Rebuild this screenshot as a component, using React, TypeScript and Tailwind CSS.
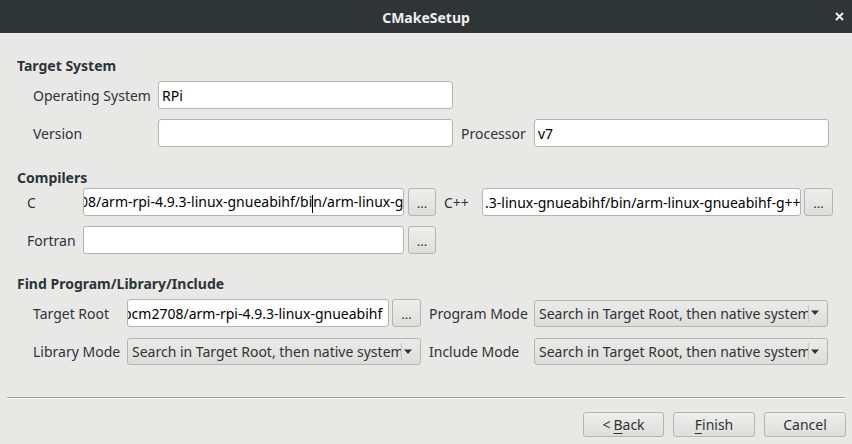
import React from "react";

const font = { fontFamily: '"Noto Sans", "DejaVu Sans", sans-serif' };

function Input({ w, children, className = "" }: { w: string; children?: React.ReactNode; className?: string }) {
  return (
    <div className={`${w} h-[28px] bg-white border border-[#b4b4b0] rounded-[3px] overflow-hidden flex items-center text-[14px] text-black whitespace-nowrap ${className}`}>
      {children}
    </div>
  );
}

function Dots({ w, className = "" }: { w: string; className?: string }) {
  return (
    <div className={`${w} h-[28px] rounded-[3px] border border-[#b4b4b0] bg-gradient-to-b from-[#eeeeec] to-[#dededb] flex items-center justify-center text-[13px] text-[#2e3436] pt-[4px] ${className}`}>
      ...
    </div>
  );
}

function Combo({ className = "" }: { className?: string }) {
  return (
    <div className={`w-[294px] h-[27px] rounded-[3px] border border-[#b4b4b0] bg-gradient-to-b from-[#ebebe9] to-[#dcdcd9] flex items-center text-[14px] text-[#2e3436] ${className}`}>
      <div className="w-[273px] overflow-hidden whitespace-nowrap pl-[4px]">Search in Target Root, then native system</div>
      <div className="w-px h-[17px] bg-[#c4c4c0]" />
      <svg width="11" height="6" viewBox="0 0 11 6" className="ml-[1px]">
        <path d="M1 0.5 L9 0.5 L5 5 Z" fill="#2e3436" />
      </svg>
    </div>
  );
}

function Btn({ w, children }: { w: string; children: React.ReactNode }) {
  return (
    <div className={`${w} h-[25px] rounded-[3px] border border-[#b4b4b0] bg-gradient-to-b from-[#eeeeec] to-[#dededb] flex items-center justify-center text-[14px] text-[#2e3436]`}>
      {children}
    </div>
  );
}

export default function App() {
  return (
    <div className="w-[852px] h-[444px] bg-[#e8e8e7] flex flex-col overflow-hidden" style={font}>
      <div className="h-[33px] bg-[#2f3537] grid grid-cols-[1fr_auto_1fr] items-center">
        <div />
        <div className="text-[14px] font-bold text-[#eeeeec] pt-[1px]">CMakeSetup</div>
        <div className="flex justify-end pr-[8px]">
          <svg width="9" height="9" viewBox="0 0 9 9">
            <path d="M1 1 L8 8 M8 1 L1 8" stroke="#eeeeec" strokeWidth="2" />
          </svg>
        </div>
      </div>

      <div className="pl-[17px] pt-[23px] text-[#2e3436] text-[14px]">
        {/* Target System */}
        <div className="h-[20px] leading-[20px] font-bold">Target System</div>
        <div className="mt-[5px] flex items-center pl-[16px]">
          <div className="w-[125px]">Operating System</div>
          <Input w="w-[295px]"><span className="pl-[3px]">RPi</span></Input>
        </div>
        <div className="mt-[10px] flex items-center pl-[16px]">
          <div className="w-[125px]">Version</div>
          <Input w="w-[295px]" />
          <div className="ml-[8px] w-[73px]">Processor</div>
          <Input w="w-[295px]"><span className="pl-[3px]">v7</span></Input>
        </div>

        {/* Compilers */}
        <div className="mt-[21px] h-[20px] leading-[20px] font-bold">Compilers</div>
        <div className="flex items-center pl-[10px]">
          <div className="w-[56px]">C</div>
          <Input w="w-[321px]">
            <span className="ml-[-20px]">
              2708/arm-rpi-4.9.3-linux-gnueabihf/bi
              <span className="inline-block w-px h-[18px] bg-black align-middle" />
              n/arm-linux-gnueabihf-gcc
            </span>
          </Input>
          <Dots w="w-[28px]" className="ml-[4px]" />
          <div className="ml-[8px] w-[38px]">C++</div>
          <Input w="w-[319px]"><span className="pl-[2px]">.3-linux-gnueabihf/bin/arm-linux-gnueabihf-g++</span></Input>
          <Dots w="w-[29px]" className="ml-[3px]" />
        </div>
        <div className="mt-[10px] flex items-center pl-[10px]">
          <div className="w-[56px]">Fortran</div>
          <Input w="w-[321px]" />
          <Dots w="w-[28px]" className="ml-[4px]" />
        </div>

        {/* Find Program */}
        <div className="mt-[20px] h-[20px] leading-[20px] font-bold">Find Program/Library/Include</div>
        <div className="mt-[5px] flex items-center pl-[16px]">
          <div className="w-[94px]">Target Root</div>
          <Input w="w-[262px]"><span className="ml-[-5px]">bcm2708/arm-rpi-4.9.3-linux-gnueabihf</span></Input>
          <Dots w="w-[29px]" className="ml-[3px]" />
          <div className="ml-[8px] w-[105px]">Program Mode</div>
          <Combo />
        </div>
        <div className="mt-[11px] flex items-center pl-[16px]">
          <div className="w-[94px]">Library Mode</div>
          <Combo />
          <div className="ml-[8px] w-[105px]">Include Mode</div>
          <Combo />
        </div>
      </div>

      <div className="mt-[32px] mx-[7px]">
        <div className="h-px bg-[#a2a2a0]" />
        <div className="h-px bg-white" />
      </div>

      <div className="mt-[13px] flex justify-end gap-[9px] pr-[6px]">
        <Btn w="w-[81px]">&lt; <span className="underline underline-offset-[3px] ml-[3px]">B</span>ack</Btn>
        <Btn w="w-[82px]"><span className="underline underline-offset-[3px]">F</span>inish</Btn>
        <Btn w="w-[82px]">Cancel</Btn>
      </div>
    </div>
  );
}
